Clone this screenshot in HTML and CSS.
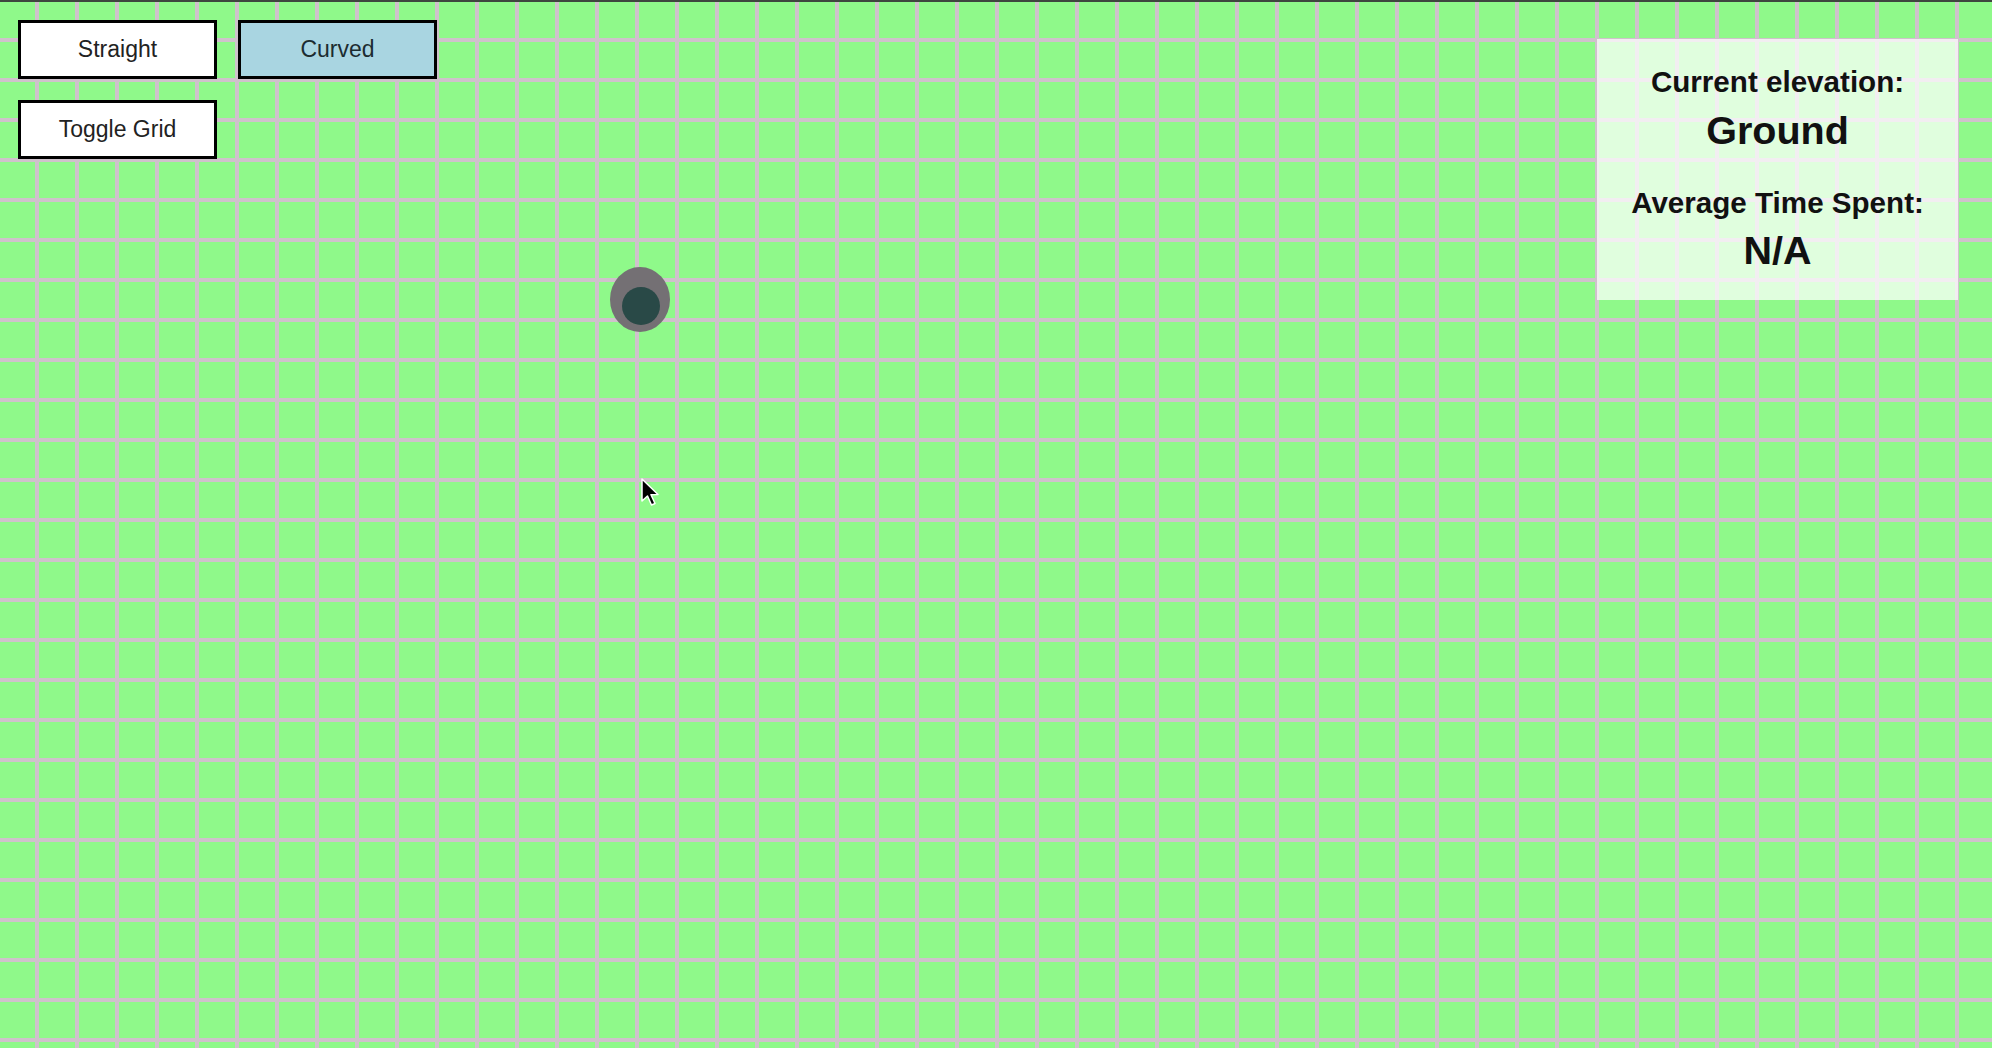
FILE: index.html
```html
<!DOCTYPE html>
<html lang="en">
<head>
    <meta charset="UTF-8">
    <meta name="viewport" content="width=device-width, initial-scale=1.0">
    <title>Elevation Grid</title>
    <link rel="stylesheet" href="styles.css">
</head>
<body>
    <div id="board">
        <div id="controls">
            <button class="mode-btn">Straight</button>
            <button class="mode-btn active">Curved</button>
            <button class="mode-btn">Toggle Grid</button>
        </div>

        <div id="marker"><span class="marker-core"></span></div>

        <svg id="pointer" width="20" height="30" viewBox="0 0 20 30">
            <path d="M2 1 L2 23 L7.5 18 L11.5 27 L15 25.5 L11 16.8 L18 16.5 Z" fill="#000" stroke="#fff" stroke-width="1.5" stroke-linejoin="round"/>
        </svg>

        <div id="infoPanel">
            <div class="stat">
                <div class="stat-label">Current elevation:</div>
                <div class="stat-value">Ground</div>
            </div>
            <div class="stat">
                <div class="stat-label">Average Time Spent:</div>
                <div class="stat-value">N/A</div>
            </div>
        </div>
    </div>
</body>
</html>
```

FILE: styles.css
```css
body {
    margin: 0;
    padding: 0;
    font-family: "Liberation Sans", Arial, sans-serif;
    overflow: hidden;
}
#board {
    position: relative;
    width: 1992px;
    height: 1048px;
    background-color: #8ff98a;
    background-image:
        linear-gradient(to bottom, #3f473f 2px, transparent 2px),
        linear-gradient(to right, #cfc2cb 4px, transparent 4px),
        linear-gradient(to bottom, #cfc2cb 4px, transparent 4px);
    background-size: 100% 100%, 40px 40px, 40px 40px;
    background-position: 0 0, 35px 0, 0 38px;
    background-repeat: no-repeat, repeat, repeat;
}
#controls {
    display: grid;
    grid-template-columns: 199px 199px;
    gap: 21px;
    padding: 20px 0 0 18px;
    width: max-content;
}
.mode-btn {
    box-sizing: border-box;
    height: 59px;
    border: 3px solid #000;
    background-color: #fff;
    color: #222;
    font-family: "Liberation Sans", Arial, sans-serif;
    font-size: 23px;
    padding: 0;
    cursor: pointer;
}
.mode-btn.active {
    background-color: #a9d5e1;
    color: #1c2c30;
}
#marker {
    position: absolute;
    left: 610px;
    top: 267px;
    width: 60px;
    height: 65px;
    border-radius: 50%;
    background-color: #747074;
    filter: blur(0.6px);
}
.marker-core {
    position: absolute;
    left: 12px;
    top: 20px;
    width: 38px;
    height: 38px;
    border-radius: 50%;
    background-color: #294947;
}
#pointer {
    position: absolute;
    left: 640px;
    top: 478px;
}
#infoPanel {
    position: absolute;
    top: 39px;
    right: 34px;
    width: 361px;
    height: 261px;
    box-sizing: border-box;
    padding-top: 25px;
    background-color: rgba(255, 255, 255, 0.72);
    text-align: center;
    color: #111;
    font-weight: bold;
}
.stat + .stat {
    margin-top: 31px;
}
.stat-label {
    font-size: 29.6px;
    line-height: 1.2;
}
.stat-value {
    font-size: 39.5px;
    line-height: 1.2;
    margin-top: 7px;
}
```
